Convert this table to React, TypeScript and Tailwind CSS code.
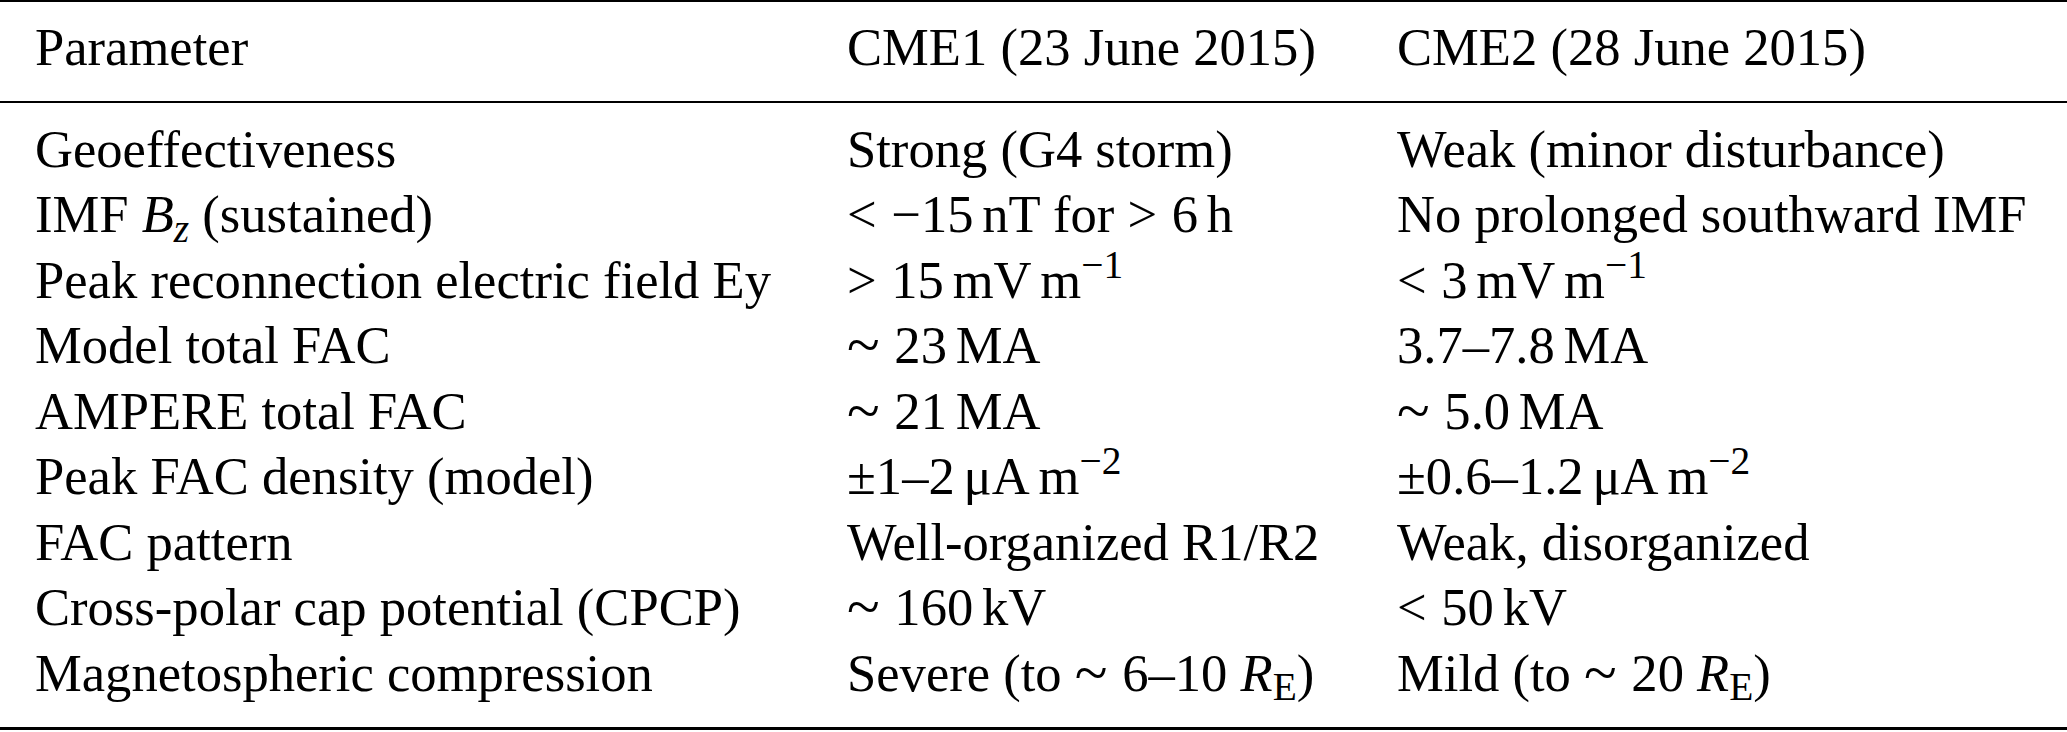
import type { ReactNode } from 'react'

// TeX-like spacing helpers
const Thin = () => <span className="inline-block w-[0.1667em]" />
const Thick = () => <span className="inline-block w-[0.2778em]" />
const Sim = () => <span className="relative top-[2px] text-[1.15em] leading-[0]">~</span>

const rows: [ReactNode, ReactNode, ReactNode][] = [
  ['Geoeffectiveness', 'Strong (G4 storm)', 'Weak (minor disturbance)'],
  [
    <>
      IMF <i>B</i>
      <sub>
        <i>z</i>
      </sub>{' '}
      (sustained)
    </>,
    <>
      &lt;
      <Thick />
      −15
      <Thin />
      nT for &gt;
      <Thick />6<Thin />h
    </>,
    'No prolonged southward IMF',
  ],
  [
    'Peak reconnection electric field Ey',
    <>
      &gt;
      <Thick />
      15
      <Thin />
      mV
      <Thin />m<sup>−1</sup>
    </>,
    <>
      &lt;
      <Thick />3<Thin />
      mV
      <Thin />m<sup>−1</sup>
    </>,
  ],
  [
    'Model total FAC',
    <>
      <Sim />
      <Thick />
      23
      <Thin />
      MA
    </>,
    <>
      3.7–7.8
      <Thin />
      MA
    </>,
  ],
  [
    'AMPERE total FAC',
    <>
      <Sim />
      <Thick />
      21
      <Thin />
      MA
    </>,
    <>
      <Sim />
      <Thick />
      5.0
      <Thin />
      MA
    </>,
  ],
  [
    'Peak FAC density (model)',
    <>
      ±1–2
      <Thin />
      μA
      <Thin />m<sup>−2</sup>
    </>,
    <>
      ±0.6–1.2
      <Thin />
      μA
      <Thin />m<sup>−2</sup>
    </>,
  ],
  ['FAC pattern', 'Well-organized R1/R2', 'Weak, disorganized'],
  [
    'Cross-polar cap potential (CPCP)',
    <>
      <Sim />
      <Thick />
      160
      <Thin />
      kV
    </>,
    <>
      &lt;
      <Thick />
      50
      <Thin />
      kV
    </>,
  ],
  [
    'Magnetospheric compression',
    <>
      Severe (to <Sim />
      <Thick />
      6–10 <i>R</i>
      <sub>E</sub>)
    </>,
    <>
      Mild (to <Sim />
      <Thick />
      20 <i>R</i>
      <sub>E</sub>)
    </>,
  ],
]

function Row({ cells }: { cells: [ReactNode, ReactNode, ReactNode] }) {
  return (
    <div className="grid grid-cols-[812px_550px_1fr] pl-[35px]">
      {cells.map((c, i) => (
        <div key={i} className="whitespace-nowrap">
          {c}
        </div>
      ))}
    </div>
  )
}

export default function App() {
  return (
    <div className="w-[2067px] bg-white font-['Liberation_Serif','Times_New_Roman',serif] text-[52.6px] leading-[65.5px] text-black">
      <div className="h-[2px] bg-black" />
      <div className="pt-[13px] pb-[20px]">
        <Row cells={['Parameter', 'CME1 (23 June 2015)', 'CME2 (28 June 2015)']} />
      </div>
      <div className="h-[2px] bg-black" />
      <div className="pt-[14px] pb-[21px]">
        {rows.map((r, i) => (
          <Row key={i} cells={r} />
        ))}
      </div>
      <div className="h-[3px] bg-black" />
    </div>
  )
}
